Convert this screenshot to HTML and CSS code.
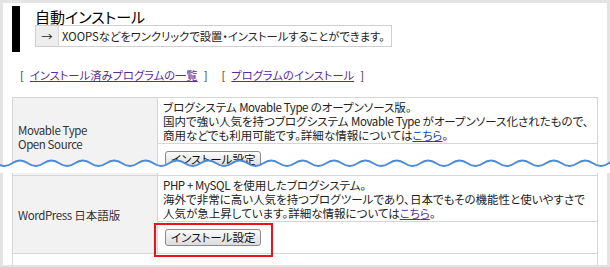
FILE: index.html
```html
<!DOCTYPE html>
<html lang="ja">
<head>
<meta charset="utf-8">
<title>自動インストール</title>
<link rel="stylesheet" href="styles.css">
</head>
<body>
<div class="frame">
  <div class="head">
    <h1 class="title">自動インストール</h1>
    <div class="lead">
      <span class="arrow">→</span>
      <span class="lead-text">XOOPSなどをワンクリックで設置・インストールすることができます。</span>
    </div>
  </div>
  <div class="nav">
    <span class="grp"><span>[</span><a class="visited" href="#">インストール済みプログラムの一覧</a><span>]</span></span>
    <span class="grp"><span>[</span><a class="visited" href="#">プログラムのインストール</a><span>]</span></span>
  </div>
  <table class="list">
    <colgroup>
      <col class="col-name">
      <col class="col-body">
    </colgroup>
    <tr>
      <td class="name" rowspan="2"><span class="latin">Movable Type</span><br><span class="latin">Open Source</span></td>
      <td class="desc">ブログシステム <span class="latin">Movable Type</span> のオープンソース版。<br>国内で強い人気を持つブログシステム <span class="latin">Movable Type</span> がオープンソース化されたもので、<br>商用などでも利用可能です。詳細な情報については<a class="fresh" href="#">こちら</a>。</td>
    </tr>
    <tr>
      <td class="act"><button class="btn" type="button">インストール設定</button></td>
    </tr>
    <tr>
      <td class="name" rowspan="2"><span class="latin">WordPress</span> 日本語版</td>
      <td class="desc"><span class="latin">PHP + MySQL</span> を使用したブログシステム。<br>海外で非常に高い人気を持つブログツールであり、日本でもその機能性と使いやすさで<br>人気が急上昇しています。詳細な情報については<a class="visited" href="#">こちら</a>。</td>
    </tr>
    <tr>
      <td class="act"><button class="btn" type="button">インストール設定</button></td>
    </tr>
    <tr class="more">
      <td colspan="2"></td>
    </tr>
  </table>
  <div class="mark"></div>
</div>
<svg class="wave" width="610" height="20" viewBox="0 0 610 20" aria-hidden="true">
  <path fill="#fff" d="M-19.25 8.3 Q-11.4 2.9 -3.55 8.3 T12.15 8.3 T27.85 8.3 T43.55 8.3 T59.25 8.3 T74.95 8.3 T90.65 8.3 T106.35 8.3 T122.05 8.3 T137.75 8.3 T153.45 8.3 T169.15 8.3 T184.85 8.3 T200.55 8.3 T216.25 8.3 T231.95 8.3 T247.65 8.3 T263.35 8.3 T279.05 8.3 T294.75 8.3 T310.45 8.3 T326.15 8.3 T341.85 8.3 T357.55 8.3 T373.25 8.3 T388.95 8.3 T404.65 8.3 T420.35 8.3 T436.05 8.3 T451.75 8.3 T467.45 8.3 T483.15 8.3 T498.85 8.3 T514.55 8.3 T530.25 8.3 T545.95 8.3 T561.65 8.3 T577.35 8.3 T593.05 8.3 T608.75 8.3 T624.45 8.3 L624.45 18 L-19.25 18 Z"/>
  <path fill="none" stroke="#4f8bd0" stroke-width="2" d="M-19.25 8.3 Q-11.4 2.9 -3.55 8.3 T12.15 8.3 T27.85 8.3 T43.55 8.3 T59.25 8.3 T74.95 8.3 T90.65 8.3 T106.35 8.3 T122.05 8.3 T137.75 8.3 T153.45 8.3 T169.15 8.3 T184.85 8.3 T200.55 8.3 T216.25 8.3 T231.95 8.3 T247.65 8.3 T263.35 8.3 T279.05 8.3 T294.75 8.3 T310.45 8.3 T326.15 8.3 T341.85 8.3 T357.55 8.3 T373.25 8.3 T388.95 8.3 T404.65 8.3 T420.35 8.3 T436.05 8.3 T451.75 8.3 T467.45 8.3 T483.15 8.3 T498.85 8.3 T514.55 8.3 T530.25 8.3 T545.95 8.3 T561.65 8.3 T577.35 8.3 T593.05 8.3 T608.75 8.3 T624.45 8.3"/>
</svg>
</body>
</html>
```

FILE: styles.css
```css
html, body {
  margin: 0;
  padding: 0;
}
body {
  background: #e3e3e3;
  font-family: "Noto Sans CJK JP", sans-serif;
  font-size: 11.5px;
  color: #333;
  font-feature-settings: "palt";
  overflow: hidden;
}
.frame {
  position: relative;
  margin: 3px 3px 0;
  height: 262px;
  background: #fff;
  overflow: hidden;
}
.head {
  margin: 3px 0 0 9px;
  border-left: 8px solid #000;
  height: 46px;
  padding-left: 15px;
  display: flex;
  flex-direction: column;
  align-items: flex-start;
}
.title {
  margin: 0;
  padding-top: 2px;
  font-size: 15px;
  line-height: 17px;
  font-weight: normal;
  color: #000;
}
.lead {
  display: flex;
  width: 357px;
  height: 22px;
  box-sizing: border-box;
  border: 1px solid #cfcfcf;
  color: #222;
  font-size: 11.3px;
}
.arrow {
  width: 22px;
  flex: none;
  background: #eeeeee;
  border-right: 1px solid #d8d8d8;
  display: flex;
  align-items: center;
  justify-content: center;
  line-height: 20px;
}
.lead-text {
  padding-left: 3px;
  line-height: 20px;
  white-space: nowrap;
}
.nav {
  display: flex;
  gap: 14px;
  margin: 15px 0 0 17px;
  line-height: 16px;
  color: #333;
  font-size: 11.3px;
}
.grp {
  display: flex;
  gap: 6px;
}
a {
  text-decoration: underline;
}
.visited {
  color: #5b2b9a;
}
.fresh {
  color: #1a3ccc;
}
.latin {
  letter-spacing: -0.4px;
}
.list {
  margin: 14px 0 0 9px;
  width: 586px;
  border-collapse: collapse;
  table-layout: fixed;
}
.col-name {
  width: 145px;
}
.list td {
  border: 1px solid #d6d6d6;
  padding: 0;
  vertical-align: top;
}
.list td.name {
  padding: 0 5px;
  background: #f2f2f2;
  vertical-align: middle;
  line-height: 14px;
  color: #333;
}
.list td.desc {
  padding: 2px 5px 1px;
  height: 42px;
  line-height: 14px;
  white-space: nowrap;
  color: #222;
}
.list td.act {
  padding: 7px 5px 7px 7px;
  height: 17px;
}
.list tr.more td {
  height: 12px;
}
.btn {
  display: block;
  font-family: inherit;
  font-size: 11.5px;
  font-feature-settings: "palt";
  height: 17px;
  line-height: 15px;
  padding: 0 5px;
  margin: 0;
  border: 1px solid #8a8a8a;
  border-radius: 3px;
  background: linear-gradient(#fbfbfb, #dcdcdc);
  color: #111;
}
.mark {
  position: absolute;
  left: 151px;
  top: 220px;
  width: 119px;
  height: 34px;
  box-sizing: border-box;
  border: 2px solid #e8141b;
}
.wave {
  position: absolute;
  left: 0;
  top: 155px;
  display: block;
}
```
